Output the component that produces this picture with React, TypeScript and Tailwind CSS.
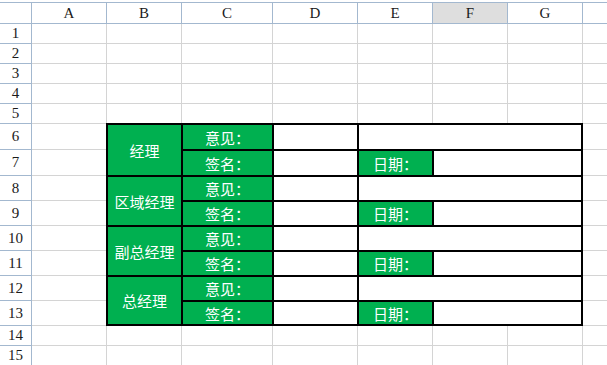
import React from "react";

const COLS = ["A", "B", "C", "D", "E", "F", "G", "H"];
const ROWS = Array.from({ length: 15 }, (_, i) => i + 1);
const GROUPS = ["经理", "区域经理", "副总经理", "总经理"];

const serif = { fontFamily: '"Liberation Serif", "Times New Roman", serif' };
const cjk = { fontFamily: '"Noto Sans CJK SC", "Noto Sans", sans-serif' };

function Table() {
  return (
    <div
      className="col-start-3 col-end-9 row-start-7 row-end-15 -ml-px -mt-px border-2 border-black bg-black grid gap-[2px] grid-cols-[73px_89px_83px_73px_1fr] grid-rows-[24px_24px_23px_23px_23px_23px_23px_1fr] text-white text-[15px] leading-none"
      style={cjk}
    >
      {GROUPS.map((g) => (
        <React.Fragment key={g}>
          <div className="row-span-2 bg-[#00b050] flex items-center justify-center">{g}</div>
          <div className="bg-[#00b050] flex items-center justify-center">意见：</div>
          <div className="bg-white" />
          <div className="col-span-2 bg-white" />
          <div className="bg-[#00b050] flex items-center justify-center">签名：</div>
          <div className="bg-white" />
          <div className="bg-[#00b050] flex items-center justify-center">日期：</div>
          <div className="bg-white" />
        </React.Fragment>
      ))}
    </div>
  );
}

export default function App() {
  return (
    <div className="w-[607px] h-[365px] overflow-hidden bg-white pt-[2px]">
      <div className="grid grid-cols-[32px_75px_75px_91px_85px_75px_75px_75px_75px] grid-rows-[22px_20px_20px_20px_20px_20px_26px_26px_25px_25px_25px_25px_25px_25px_20px_20px] w-[640px]">
        <div className="border-t border-r border-b border-[#a3b8cf] bg-white" />
        {COLS.map((c) => (
          <div
            key={c}
            className={
              c === "F"
                ? "border-t border-r border-b border-[#a3b8cf] bg-[#dedede] flex items-center justify-center text-[15px] text-[#1a1a1a] leading-none"
                : "border-t border-r border-b border-[#a3b8cf] bg-white flex items-center justify-center text-[15px] text-[#1a1a1a] leading-none"
            }
            style={serif}
          >
            {c === "H" ? null : c}
          </div>
        ))}
        {ROWS.map((r) => (
          <React.Fragment key={r}>
            <div
              className="border-r border-b border-[#a3b8cf] bg-white flex items-center justify-center text-[15px] text-[#1a1a1a] leading-none"
              style={serif}
            >
              {r}
            </div>
            {COLS.map((c, ci) => {
              if (r >= 6 && r <= 13 && ci >= 1 && ci <= 6) return null;
              return <div key={c} className="border-r border-b border-[#d4d4d4] bg-white" />;
            })}
          </React.Fragment>
        ))}
        <Table />
      </div>
    </div>
  );
}
